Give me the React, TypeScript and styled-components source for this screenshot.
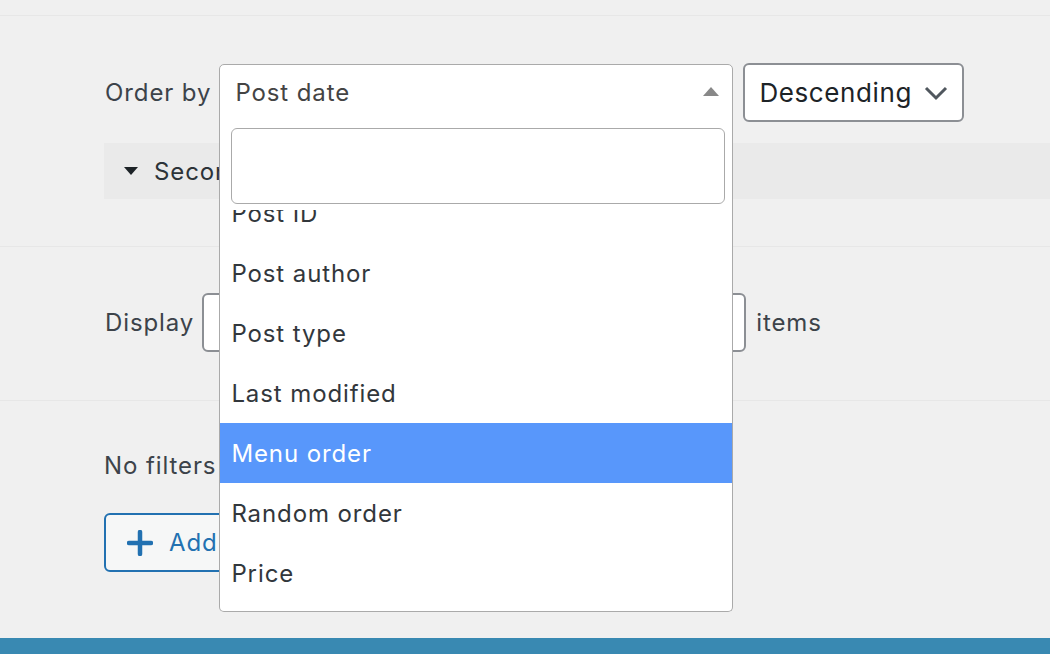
import { useLayoutEffect, useRef } from 'react';
import styled, { createGlobalStyle } from 'styled-components';

const orderOptions = [
  'Post date',
  'Post ID',
  'Post author',
  'Post type',
  'Last modified',
  'Menu order',
  'Random order',
  'Price',
  'Popularity',
];

const GlobalStyle = createGlobalStyle`
  html, body {
    margin: 0;
    padding: 0;
    height: 100%;
    overflow: hidden;
    background: #f0f0f0;
  }
  body {
    font-family: Inter, "Noto Sans", "Liberation Sans", sans-serif;
    letter-spacing: 0.9px;
    color: #2c3338;
  }
  #root {
    height: 100%;
  }
`;

const Page = styled.div`
  display: flex;
  flex-direction: column;
  height: 100%;
`;

const TopStrip = styled.div`
  height: 15px;
  flex-shrink: 0;
  border-bottom: 1px solid #e7e7e7;
`;

const Section = styled.section<{ $top: number; $bottom: number; $grow?: boolean }>`
  padding: ${p => p.$top}px 0 ${p => p.$bottom}px 104px;
  border-bottom: ${p => (p.$grow ? 'none' : '1px solid #e7e7e7')};
  flex: ${p => (p.$grow ? 1 : 'none')};
`;

const Row = styled.div`
  display: flex;
  align-items: center;
`;

const Label = styled.span`
  font-size: 24px;
  line-height: 34px;
  color: #3c434a;
  margin-left: 1px;
  margin-right: 8px;
`;

const SelectWrap = styled.div`
  position: relative;
  width: 514px;
  z-index: 10;
`;

const SelectBox = styled.div`
  box-sizing: border-box;
  height: 57px;
  display: flex;
  align-items: center;
  justify-content: space-between;
  padding: 0 13px 0 15px;
  background: #fff;
  border: 1px solid #aaa;
  border-radius: 5px 5px 0 0;
  font-size: 24px;
  color: #444;
`;

const ArrowUp = styled.span`
  width: 0;
  height: 0;
  border-style: solid;
  border-width: 0 8px 9px 8px;
  border-color: transparent transparent #888 transparent;
  margin-top: -2px;
`;

const Dropdown = styled.div`
  position: absolute;
  top: 100%;
  left: 0;
  right: 0;
  margin-top: -1px;
  background: #fff;
  border: 1px solid #aaa;
  border-top: none;
  border-radius: 0 0 5px 5px;
  overflow: hidden;
`;

const SearchArea = styled.div`
  padding: 8px 7px 6px 11px;
  background: #fff;
`;

const SearchField = styled.div`
  box-sizing: border-box;
  height: 76px;
  border: 1px solid #aaa;
  border-radius: 6px;
  background: #fff;
`;

const Results = styled.ul`
  list-style: none;
  margin: 0;
  padding: 0;
  height: 401px;
  overflow-y: auto;
  scrollbar-width: none;
  &::-webkit-scrollbar {
    display: none;
  }
`;

const Option = styled.li<{ $hover?: boolean }>`
  height: 60px;
  display: flex;
  align-items: center;
  padding: 0 11px;
  font-size: 24px;
  color: ${p => (p.$hover ? '#fff' : '#32373c')};
  background: ${p => (p.$hover ? '#5897fb' : 'transparent')};
`;

const OrderSelect = styled.div`
  box-sizing: border-box;
  height: 59px;
  width: 221px;
  margin-left: 10px;
  display: flex;
  align-items: center;
  justify-content: space-between;
  padding: 0 14px 0 14px;
  background: #fff;
  border: 2px solid #8c8f94;
  border-radius: 6px;
  font-size: 26px;
  letter-spacing: 0.6px;
  color: #1d2327;
`;

const Secondary = styled.div`
  margin-top: 21px;
  height: 56px;
  display: flex;
  align-items: center;
  padding-left: 20px;
  background: #eaeaea;
  font-size: 24px;
  color: #2c3338;
  gap: 16px;
`;

const Caret = styled.span`
  width: 0;
  height: 0;
  border-style: solid;
  border-width: 8px 7px 0 7px;
  border-color: #1d2327 transparent transparent transparent;
`;

const NumberInput = styled.div`
  box-sizing: border-box;
  width: 544px;
  height: 59px;
  margin-right: 10px;
  background: #fff;
  border: 2px solid #8c8f94;
  border-radius: 6px;
`;

const Text = styled.span`
  font-size: 24px;
  line-height: 34px;
  color: #3c434a;
`;

const AddButton = styled.button`
  box-sizing: border-box;
  margin-top: 30px;
  height: 59px;
  display: flex;
  align-items: center;
  gap: 16px;
  padding: 0 40px 0 21px;
  background: #f6f7f7;
  border: 2px solid #2271b1;
  border-radius: 6px;
  font-family: inherit;
  font-size: 24px;
  letter-spacing: 0.9px;
  color: #2271b1;
`;

const FooterBar = styled.div`
  height: 16px;
  flex-shrink: 0;
  background: #3989b2;
`;

function ChevronDown() {
  return (
    <svg width="24" height="16" viewBox="0 0 24 16">
      <polyline points="2,3 12,13 22,3" fill="none" stroke="#50575e" strokeWidth="3" />
    </svg>
  );
}

function PlusIcon() {
  return (
    <svg width="26" height="26" viewBox="0 0 26 26">
      <path d="M13 2v22M2 13h22" stroke="#2271b1" strokeWidth="4.5" strokeLinecap="round" />
    </svg>
  );
}

function App() {
  const resultsRef = useRef<HTMLUListElement>(null);

  // the open list is scrolled a little past "Post date"
  useLayoutEffect(() => {
    if (resultsRef.current) resultsRef.current.scrollTop = 87;
  }, []);

  return (
    <Page>
      <GlobalStyle />
      <TopStrip />
      <Section $top={47} $bottom={47}>
        <Row>
          <Label>Order by</Label>
          <SelectWrap>
            <SelectBox>
              <span>Post date</span>
              <ArrowUp />
            </SelectBox>
            <Dropdown>
              <SearchArea>
                <SearchField />
              </SearchArea>
              <Results ref={resultsRef}>
                {orderOptions.map(option => (
                  <Option key={option} $hover={option === 'Menu order'}>
                    {option}
                  </Option>
                ))}
              </Results>
            </Dropdown>
          </SelectWrap>
          <OrderSelect>
            <span>Descending</span>
            <ChevronDown />
          </OrderSelect>
        </Row>
        <Secondary>
          <Caret />
          <span>Secondary sort</span>
        </Secondary>
      </Section>
      <Section $top={46} $bottom={48}>
        <Row>
          <Label>Display</Label>
          <NumberInput />
          <Text>items</Text>
        </Row>
      </Section>
      <Section $top={48} $bottom={0} $grow>
        <Text>No filters have been added</Text>
        <AddButton>
          <PlusIcon />
          <span>Add filter</span>
        </AddButton>
      </Section>
      <FooterBar />
    </Page>
  );
}

export default App;
